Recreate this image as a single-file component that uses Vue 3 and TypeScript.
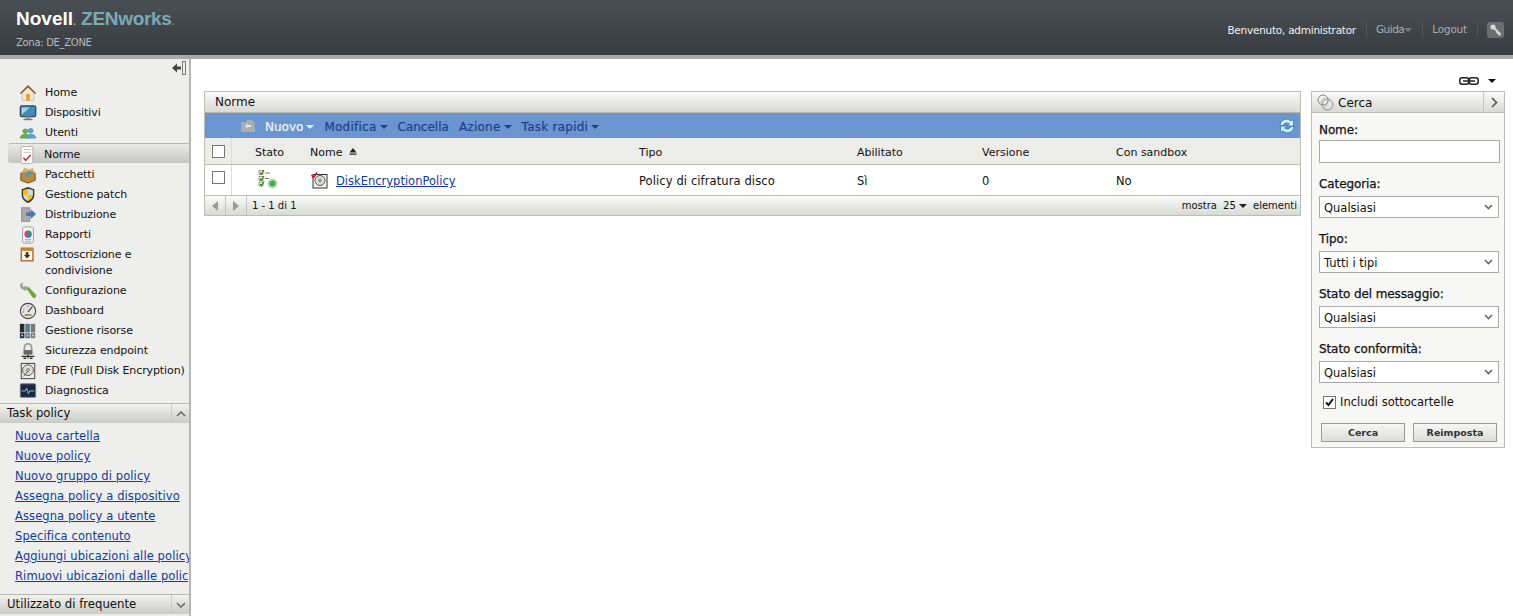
<script setup lang="ts">
interface NavItem { label: string; icon: string; active?: boolean }
const nav: NavItem[] = [
  { label: 'Home', icon: 'home' },
  { label: 'Dispositivi', icon: 'monitor' },
  { label: 'Utenti', icon: 'users' },
  { label: 'Norme', icon: 'policy', active: true },
  { label: 'Pacchetti', icon: 'box' },
  { label: 'Gestione patch', icon: 'shield' },
  { label: 'Distribuzione', icon: 'deploy' },
  { label: 'Rapporti', icon: 'report' },
  { label: 'Sottoscrizione e condivisione', icon: 'sub' },
  { label: 'Configurazione', icon: 'wrench' },
  { label: 'Dashboard', icon: 'gauge' },
  { label: 'Gestione risorse', icon: 'binders' },
  { label: 'Sicurezza endpoint', icon: 'lock' },
  { label: 'FDE (Full Disk Encryption)', icon: 'disk' },
  { label: 'Diagnostica', icon: 'diag' },
]
const tasks = ['Nuova cartella', 'Nuove policy', 'Nuovo gruppo di policy', 'Assegna policy a dispositivo', 'Assegna policy a utente', 'Specifica contenuto', 'Aggiungi ubicazioni alle policy', 'Rimuovi ubicazioni dalle policy']
const filters = [
  { label: 'Categoria:', value: 'Qualsiasi' },
  { label: 'Tipo:', value: 'Tutti i tipi' },
  { label: 'Stato del messaggio:', value: 'Qualsiasi' },
  { label: 'Stato conformità:', value: 'Qualsiasi' },
]
</script>

<template>
  <div class="page">
    <header class="top">
      <div class="brand">
        <div class="logo"><span class="novell">Novell<i>.</i></span> <span class="zen">ZENworks<i>.</i></span></div>
        <div class="zone">Zona: DE_ZONE</div>
      </div>
      <div class="userbar">
        <span class="welcome">Benvenuto, administrator</span>
        <span class="link sep guida">Guida<b class="tri"></b></span>
        <span class="link sep">Logout</span>
        <span class="sep key">
          <span class="keybox">
            <svg width="14" height="14" viewBox="0 0 14 14"><circle cx="4" cy="4" r="2.600" fill="#d8d8d8"/><path d="M5 5l6.500 6.500M9 9l-1.300 1.300M11 11l-1.300 1.300" stroke="#d8d8d8" stroke-width="2" fill="none"/></svg>
          </span>
        </span>
      </div>
    </header>

    <div class="body">
      <aside class="side">
        <div class="collapse">
          <svg width="14" height="14" viewBox="0 0 14 14"><path d="M0 7l5-4.500v3h4v3H5v3z" fill="#444"/><rect x="10.500" y="0.500" width="3" height="13" fill="#eee" stroke="#777"/></svg>
        </div>
        <nav class="nav">
          <div v-for="n in nav" :key="n.label" class="nav-row" :class="{ active: n.active }">
            <span class="nav-icon">
              <svg width="18" height="18" viewBox="0 0 20 20">
                <g v-if="n.icon === 'home'"><path d="M3.500 9v9.500h13V9L10 3z" fill="#efe9dd" stroke="#b8a88c" stroke-width=".7"/><path d="M10 1L1 10l1.200 1L10 4l7.800 7 1.200-1z" fill="#8f6128"/><rect x="8" y="11" width="4" height="7.500" fill="#f09a1a"/></g>
                <g v-else-if="n.icon === 'monitor'"><rect x="1.500" y="2" width="17" height="12" rx="1.500" fill="#3f8db5" stroke="#3b4a55" stroke-width="1.500"/><path d="M3 4h9L3 12z" fill="#a5d3e8"/><rect x="7" y="14" width="6" height="2.500" fill="#999"/><rect x="5" y="16.500" width="10" height="1.500" fill="#777"/></g>
                <g v-else-if="n.icon === 'users'"><circle cx="7" cy="8" r="3" fill="#6aa84f"/><path d="M1 16c0-4 3-5 6-5s5 1 5 5z" fill="#6aa84f"/><circle cx="13" cy="7.500" r="3" fill="#5f9fc5"/><path d="M7 16c0-4 3-5 6-5s6 1 6 5z" fill="#5f9fc5"/></g>
                <g v-else-if="n.icon === 'policy'"><rect x="3.500" y="0.500" width="13" height="19" rx="1" fill="#fff" stroke="#aaa"/><path d="M6 4h8M6 7h8" stroke="#bbb"/><path d="M6 13l2.500 3L14 10" stroke="#d3213a" stroke-width="1.700" fill="none"/></g>
                <g v-else-if="n.icon === 'box'"><path d="M2 8l8-3 8 3v8l-8 3-8-3z" fill="#b98a45" stroke="#6d4c1f"/><path d="M2 8L6 2l6 2-2 2zM18 8l-3-6-5 3z" fill="#d8b070"/><path d="M7 8l7-2 1 4-7 2z" fill="#4d9cc0"/></g>
                <g v-else-if="n.icon === 'shield'"><path d="M10 1l7 2.500V10c0 4-3 7-7 9-4-2-7-5-7-9V3.500z" fill="#333"/><path d="M10 3v7H4.500V4.500zM10 10h5.500c0 3-2.500 5.500-5.500 7z" fill="#f4c20d"/><path d="M10 3l5.500 1.500V10H10zM4.500 10H10v7c-3-1.500-5.500-4-5.500-7z" fill="#d5d8dc"/></g>
                <g v-else-if="n.icon === 'deploy'"><rect x="3" y="2" width="9" height="15" fill="#aaa" stroke="#888"/><path d="M8 7h5V3.500L19 9l-6 5.500V11H8z" fill="#4d73b8"/></g>
                <g v-else-if="n.icon === 'report'"><rect x="4" y="1" width="12" height="18" rx="2" fill="#f3f3ef" stroke="#999"/><circle cx="10" cy="9" r="4" fill="#e0358f"/><path d="M10 9V5a4 4 0 0 1 4 4z" fill="#37a24b"/><path d="M10 9h4a4 4 0 0 1-4 4z" fill="#2e7fcb"/><path d="M6.500 15h7M6.500 17h7" stroke="#aaa"/></g>
                <g v-else-if="n.icon === 'sub'"><rect x="2.500" y="2.500" width="13" height="14" fill="#fbf5e6" stroke="#a5692a" stroke-width="1.500"/><rect x="2.500" y="2.500" width="13" height="3" fill="#c98635"/><path d="M7.500 7h3v3h2L9 14l-3.500-4h2z" fill="#333"/></g>
                <g v-else-if="n.icon === 'wrench'"><path d="M8 7l2-2 8.500 8.500c.8 1 .8 2.500 0 3.500s-2.500 1-3.500 0z" fill="#6aa83a"/><path d="M1 4c0-2 2-3.500 4-3L3.500 3.500 5.500 5.500 8 4c.5 2-.5 4-2.500 4.500S1.500 7 1 4z" fill="#a0a0a0"/><path d="M5 8l3-3 2 2-3 3z" fill="#a0a0a0"/></g>
                <g v-else-if="n.icon === 'gauge'"><circle cx="10" cy="10" r="8.500" fill="#e4e4e4" stroke="#444" stroke-width="1.200"/><path d="M10 11l5-6" stroke="#333" stroke-width="1.200"/><path d="M5 8l1 1M10 4v1.500M4 11h1.500" stroke="#555"/><path d="M6.500 14.500h4" stroke="#d22" stroke-width="1.500"/><path d="M10.500 14.500h3.500" stroke="#2a2" stroke-width="1.500"/></g>
                <g v-else-if="n.icon === 'binders'"><rect x="1" y="2" width="5" height="16" fill="#2a2a2a"/><rect x="7" y="2" width="5" height="16" fill="#4f7c88"/><rect x="13" y="2" width="5" height="16" fill="#777"/><path d="M1 12h17" stroke="#ddd"/><circle cx="3.500" cy="15" r="1" fill="#ddd"/><circle cx="9.500" cy="15" r="1" fill="#ddd"/><circle cx="15.500" cy="15" r="1" fill="#ddd"/></g>
                <g v-else-if="n.icon === 'lock'"><path d="M6 9V6a4 4 0 0 1 8 0v3" stroke="#999" stroke-width="2" fill="none"/><rect x="5" y="9" width="10" height="5" fill="#666"/><path d="M3 16h14M5 18h3M12 18h3M10 14v4" stroke="#333" stroke-width="1.500"/></g>
                <g v-else-if="n.icon === 'disk'"><rect x="2.500" y="1.500" width="15" height="17" fill="#f0f0ea" stroke="#333"/><circle cx="10" cy="9" r="6" fill="#ddd" stroke="#555"/><circle cx="10" cy="9" r="1.500" fill="#fff" stroke="#555"/><path d="M5 16l5-6" stroke="#555"/></g>
                <g v-else-if="n.icon === 'diag'"><rect x="1.500" y="2" width="17" height="15" rx="1" fill="#1c2840" stroke="#777"/><path d="M3 10h4l1.500-3 2 6 1.500-3H17" stroke="#9cc3e0" fill="none"/></g>
              </svg>
            </span>
            <span class="nav-label">{{ n.label }}</span>
          </div>
        </nav>

        <div class="accordion">
          <span class="acc-text">Task policy</span>
          <span class="acc-btn"><svg width="10" height="6" viewBox="0 0 10 6"><path d="M1 5l4-4 4 4" stroke="#666" stroke-width="1.500" fill="none"/></svg></span>
        </div>
        <div class="tasks">
          <a v-for="t in tasks" :key="t" class="task">{{ t }}</a>
        </div>
        <div class="accordion second">
          <span class="acc-text">Utilizzato di frequente</span>
          <span class="acc-btn"><svg width="10" height="6" viewBox="0 0 10 6"><path d="M1 1l4 4 4-4" stroke="#666" stroke-width="1.500" fill="none"/></svg></span>
        </div>
      </aside>

      <main class="main">
        <div class="linkbar">
          <svg width="20" height="8" viewBox="0 0 20 8"><rect x="0.800" y="0.800" width="9" height="6.400" rx="2.500" fill="none" stroke="#222" stroke-width="1.500"/><rect x="10.200" y="0.800" width="9" height="6.400" rx="2.500" fill="none" stroke="#222" stroke-width="1.500"/><path d="M4 4h12" stroke="#222" stroke-width="1.500"/></svg>
          <b class="tri dark"></b>
        </div>
        <div class="columns">
          <section class="panel">
            <div class="panel-title">Norme</div>
            <div class="toolbar">
              <svg class="folder" width="16" height="14" viewBox="0 0 16 14"><path d="M1 3h5l1-2h5l1 2h2v10H1z" fill="#a8aeb5"/><path d="M5 7l2.500-2.500V6H11v2H7.500v1.500z" fill="#e8e8e8"/></svg>
              <span class="tool on">Nuovo<b class="tri white"></b></span>
              <span class="tool wide">Modifica<b class="tri navy"></b></span>
              <span class="tool">Cancella</span>
              <span class="tool wide">Azione<b class="tri navy"></b></span>
              <span class="tool wide">Task rapidi<b class="tri navy"></b></span>
              <svg class="refresh" width="16" height="16" viewBox="0 0 16 16"><path d="M1 7.500A6.500 6.500 0 0 1 12 3l2.500-1.500V8H8l2.500-2A4 4 0 0 0 4 7.500z" fill="#d8ebf7" stroke="#2f7fc0" stroke-width=".8"/><path d="M15 8.500A6.500 6.500 0 0 1 4 13l-2.500 1.500V8H8l-2.500 2A4 4 0 0 0 12 8.500z" fill="#d8ebf7" stroke="#2f7fc0" stroke-width=".8"/></svg>
            </div>
            <div class="grid head">
              <div class="c-check"><span class="box"></span></div>
              <div class="cell c-stato">Stato</div>
              <div class="cell c-nome">Nome <svg class="sort" width="8" height="8" viewBox="0 0 8 8"><path d="M4 0l3.500 4.500h-7z" fill="#222"/><rect x="0.500" y="5.500" width="7" height="1.200" fill="#222"/></svg></div>
              <div class="cell">Tipo</div>
              <div class="cell">Abilitato</div>
              <div class="cell">Versione</div>
              <div class="cell">Con sandbox</div>
            </div>
            <div class="grid row">
              <div class="c-check"><span class="box raised"></span></div>
              <div class="status">
                <svg width="20" height="20" viewBox="0 0 20 20"><path d="M1 1.500h4v4H1zM1 7.500h4v4H1zM1 13h4v4H1z" fill="#fff" stroke="#8a7a5a" stroke-width=".8"/><path d="M2 3.500l1.500 1.500L6 1M2 9.500L3.500 11 6 7M2 15l1.500 1.500L6 12.500" stroke="#1a8a1a" stroke-width="1.200" fill="none"/><path d="M7 4h5M7 9.500h4" stroke="#777"/><circle cx="14.500" cy="14.500" r="5" fill="#bcd8bc"/><circle cx="14.500" cy="14.500" r="3" fill="#3fb04a"/></svg>
              </div>
              <div class="name">
                <svg width="17" height="17" viewBox="0 0 17 17"><rect x="2" y="2.500" width="14" height="13.500" fill="#f5f5ee" stroke="#333"/><circle cx="9" cy="8.500" r="5" fill="#ddd" stroke="#555"/><circle cx="9" cy="8.500" r="1.200" fill="#fff" stroke="#555"/><path d="M0.500 3L2.500 5.500 6 0.500" stroke="#c8102e" stroke-width="1.400" fill="none"/></svg>
                <a class="link-policy">DiskEncryptionPolicy</a>
              </div>
              <div class="cell tipo">Policy di cifratura disco</div>
              <div class="cell">Sì</div>
              <div class="cell">0</div>
              <div class="cell">No</div>
            </div>
            <div class="pager">
              <span class="pg-btn"><i class="arrow left"></i></span>
              <span class="pg-btn"><i class="arrow right"></i></span>
              <span class="count">1 - 1 di 1</span>
              <span class="show">mostra <span class="num">25<b class="tri small"></b></span> elementi</span>
            </div>
          </section>

          <aside class="search">
            <div class="search-title">
              <svg width="17" height="17" viewBox="0 0 17 17"><circle cx="6" cy="6" r="5" fill="none" stroke="#888"/><circle cx="10.500" cy="10.500" r="5.500" fill="none" stroke="#888"/><path d="M3 9l5-6M7 14l6-8" stroke="#bbb"/></svg>
              <span class="search-text">Cerca</span>
              <span class="search-btn"><svg width="7" height="11" viewBox="0 0 7 11"><path d="M1 1l4.500 4.500L1 10" stroke="#555" stroke-width="1.600" fill="none"/></svg></span>
            </div>
            <div class="search-body">
              <label class="flabel">Nome:</label>
              <div class="input"></div>
              <template v-for="f in filters" :key="f.label">
                <label class="flabel">{{ f.label }}</label>
                <div class="select">
                  <span class="sel-text">{{ f.value }}</span>
                  <svg width="9" height="6" viewBox="0 0 9 6"><path d="M1 1l3.500 3.500L8 1" stroke="#666" stroke-width="1.600" fill="none"/></svg>
                </div>
              </template>
              <div class="sub-check">
                <span class="cb"><svg width="11" height="11" viewBox="0 0 11 11"><path d="M2 5.500l2.500 2.500L9 2" stroke="#111" stroke-width="2" fill="none"/></svg></span>
                Includi sottocartelle
              </div>
              <div class="buttons">
                <span class="btn">Cerca</span>
                <span class="btn">Reimposta</span>
              </div>
            </div>
          </aside>
        </div>
      </main>
    </div>
  </div>
</template>

<style scoped>
.page { width: 1513px; height: 616px; overflow: hidden; display: flex; flex-direction: column; background: #fff; font-family: "DejaVu Sans", sans-serif; font-size: 11px; color: #111; }
.top { height: 55px; flex: none; display: flex; justify-content: space-between; background: linear-gradient(#4a4f53, #383c40); border-bottom: 4px solid #a9a9a9; box-sizing: content-box; }
.brand { padding: 9px 0 0 16px; }
.logo { font-family: "Liberation Sans", sans-serif; font-weight: 700; font-size: 19px; line-height: 20px; }
.logo i { font-style: normal; font-size: 10px; opacity: .6; }
.novell { color: #fff; }
.zen { color: #7ba9b8; letter-spacing: -.3px; }
.zone { color: #b9bdc0; font-size: 10px; margin-top: 4px; line-height: 13px; letter-spacing: -.3px; }
.userbar { display: flex; align-items: center; height: 19px; margin-top: 20px; padding-right: 9px; }
.welcome { color: #f2f2f2; padding-right: 10px; font-size: 10.5px; letter-spacing: -.25px; }
.link { color: #a9adb0; font-size: 10.5px; letter-spacing: -.2px; }
.sep { border-left: 1px solid #55595c; padding: 0 10px 0 9px; height: 15px; line-height: 15px; }
.guida { letter-spacing: -.5px; }
.guida .tri { margin-left: 0; }
.key { padding: 0 0 0 9px; border-left: 1px solid #55595c; display: flex; align-items: center; }
.keybox { width: 17px; height: 16px; border-radius: 3px; background: #6c6f72; display: flex; align-items: center; justify-content: center; }
.tri { display: inline-block; width: 0; height: 0; border-left: 4px solid transparent; border-right: 4px solid transparent; border-top: 4px solid #777; margin-left: 1px; vertical-align: middle; }
.tri.dark { border-top-color: #111; margin-left: 9px; }
.tri.white { border-top-color: #e8edf5; margin-left: 3px; }
.tri.navy { border-top-color: #1f3f8a; margin-left: 3px; }
.tri.small { border-top-color: #222; margin-left: 3px; }

.body { flex: 1; display: flex; min-height: 0; }
.side { width: 189px; flex: none; background: #eeeeec; border-right: 2px solid #b5b5b1; overflow: hidden; display: flex; flex-direction: column; }
.collapse { height: 20px; flex: none; padding: 2px 3px 0 0; display: flex; justify-content: flex-end; box-sizing: border-box; }
.nav { padding-top: 3px; flex: none; }
.nav-row { display: flex; align-items: flex-start; padding: 3px 0 1px 18px; line-height: 16px; font-size: 11px; letter-spacing: -.1px; }
.nav-row.active { height: 20px; margin: 1px 0 1px 8px; padding: 3px 0 0 9px; border-radius: 3px 0 0 3px; border-top: 1px solid #b8b8b2; background: linear-gradient(#eaeae6, #c4c6c0); box-sizing: border-box; }
.nav-icon { width: 20px; height: 16px; flex: none; margin-right: 7px; display: flex; justify-content: center; align-items: center; }
.nav-label { max-width: 144px; }
.accordion { height: 20px; margin-top: 3px; flex: none; display: flex; justify-content: space-between; align-items: center; padding-left: 7px; font-size: 11.7px; background: linear-gradient(#f2f2ef, #c9cbc6); border-top: 1px solid #b8b8b2; box-sizing: border-box; }
.accordion.second { margin-top: 8px; }
.acc-text { padding-bottom: 2px; }
.acc-btn { width: 17px; height: 19px; border-left: 1px solid #c9c9c5; display: flex; align-items: center; justify-content: center; }
.tasks { padding: 3px 0 0 15px; white-space: nowrap; overflow: hidden; flex: none; }
.task { display: block; height: 20px; line-height: 20px; color: #0f3aa5; width: max-content; text-decoration: underline; font-size: 11.5px; letter-spacing: .1px; }

.main { flex: 1; min-width: 0; padding: 15px 9px 0 13px; }
.linkbar { height: 14px; margin-bottom: 3px; display: flex; justify-content: flex-end; align-items: center; padding-right: 8px; }
.columns { display: flex; gap: 10px; align-items: flex-start; }
.panel { width: 1097px; flex: none; border: 1px solid #bdbdb8; box-sizing: border-box; }
.panel-title { height: 20px; line-height: 21px; padding-left: 10px; background: linear-gradient(#fafaf8, #d8dad6); border-bottom: 1px solid #b8b8b2; font-size: 12px; }
.toolbar { height: 25px; background: #6a95ce; display: flex; align-items: center; padding-left: 35px; font-size: 12px; position: relative; }
.folder { margin-right: 9px; }
.tool { color: #1f3f8a; margin-right: 10px; font-size: 12px; padding-top: 2px; -webkit-text-stroke: .2px currentColor; }
.tool.wide { letter-spacing: .25px; }
.tool.on { color: #f2f5fa; }
.refresh { position: absolute; right: 5px; top: 5px; }
.grid { display: grid; grid-template-columns: 27px 78px 329px 218px 125px 134px 1fr; align-items: center; }
.cell { padding-top: 2px; }
.head { height: 26px; background: #ecece9; border-bottom: 1px solid #bdbdb8; }
.row { height: 30px; background: #fff; border-bottom: 1px solid #bdbdb8; font-size: 11.5px; }
.tipo { letter-spacing: .1px; }
.c-check { height: 100%; border-right: 1px solid #dcdcd8; display: flex; align-items: center; justify-content: center; }
.c-stato { padding-left: 23px; }
.box { width: 11px; height: 11px; border: 1px solid #777; background: #fff; display: block; }
.box.raised { margin-bottom: 6px; }
.status { padding-left: 26px; height: 20px; margin-top: -2px; }
.name { display: flex; align-items: center; gap: 7px; margin-left: 1px; }
.sort { margin-left: 3px; }
.link-policy { color: #0f3aa5; text-decoration: underline; margin: 2px 0 0 1px; }
.pager { height: 19px; background: linear-gradient(#fafaf8, #d8dad6); display: flex; align-items: center; }
.pg-btn { width: 21px; height: 19px; border-right: 1px solid #c4c4c0; display: flex; align-items: center; justify-content: center; box-sizing: border-box; }
.arrow { width: 0; height: 0; border-top: 5px solid transparent; border-bottom: 5px solid transparent; display: block; }
.arrow.left { border-right: 6px solid #999; }
.arrow.right { border-left: 6px solid #999; }
.count { margin-left: 5px; font-size: 10px; }
.show { margin-left: auto; padding-right: 3px; font-size: 10px; }
.num { margin: 0 3px; }

.search { width: 194px; flex: none; border: 1px solid #bdbdb8; box-sizing: border-box; background: #f7f7f6; }
.search-title { height: 20px; display: flex; align-items: center; padding-left: 5px; background: linear-gradient(#fafaf8, #d8dad6); border-bottom: 1px solid #bdbdb8; font-size: 12px; }
.search-text { margin-left: 4px; flex: 1; padding-top: 2px; }
.search-btn { width: 20px; height: 20px; border-left: 1px solid #c4c4c0; display: flex; align-items: center; justify-content: center; }
.search-body { padding: 8px 4px 5px 7px; }
.flabel { display: block; font-size: 12px; line-height: 18px; height: 18px; -webkit-text-stroke: .25px #111; letter-spacing: -.1px; }
.input { height: 23px; width: 181px; box-sizing: border-box; border: 1px solid #aaa; background: #fff; margin: 1px 0 12px; }
.select { height: 22px; width: 180px; box-sizing: border-box; border: 1px solid #aaa; background: #fff; margin: 3px 0 12px; display: flex; align-items: center; justify-content: space-between; padding: 0 5px 0 4px; font-size: 11.5px; }
.sel-text { padding-top: 2px; }
.sub-check { display: flex; align-items: center; margin: -3px 0 0 4px; height: 20px; font-size: 11.5px; }
.cb { width: 11px; height: 11px; border: 1px solid #777; background: #fff; margin-right: 4px; display: flex; align-items: center; justify-content: center; }
.buttons { display: flex; gap: 8px; margin: 11px 0 0 2px; }
.btn { width: 84px; height: 19px; box-sizing: border-box; border: 1px solid #999; background: linear-gradient(#f6f6f4, #dcdcd8); font-size: 9.5px; font-weight: 700; color: #333; text-align: center; line-height: 17px; }
</style>
